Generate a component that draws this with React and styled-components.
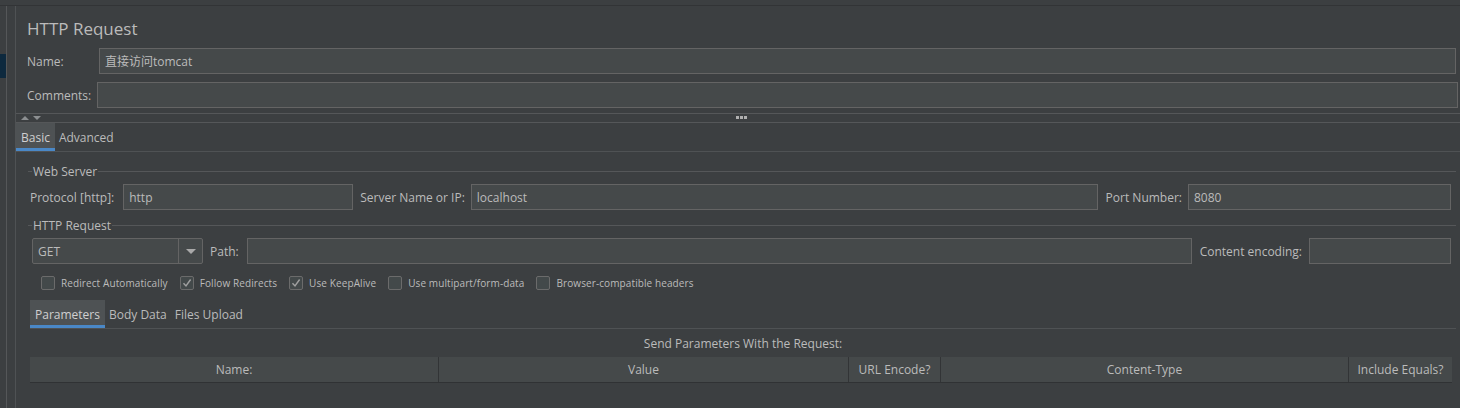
import React from "react";
import styled, { createGlobalStyle } from "styled-components";

const GlobalStyle = createGlobalStyle`
  html, body {
    margin: 0;
    padding: 0;
    background: #3c3f41;
  }
  body {
    font-family: "Open Sans", "Noto Sans CJK SC", sans-serif;
    font-size: 12px;
    color: #bbbbbb;
  }
`;

const Window = styled.div`
  width: 1460px;
  height: 408px;
  background: #3c3f41;
  display: flex;
  flex-direction: column;
  overflow: hidden;
`;

const TopStrip = styled.div`
  height: 5px;
  border-bottom: 1px solid #323436;
`;

const Body = styled.div`
  flex: 1;
  display: flex;
`;

const Tree = styled.div`
  width: 6px;
  border-right: 1px solid #555759;
  padding-top: 48px;
`;

const TreeSelection = styled.div`
  height: 24px;
  background: #0d293e;
`;

const Gutter = styled.div`
  width: 8px;
  border-right: 1px solid #4f5254;
`;

const Main = styled.div`
  flex: 1;
  display: flex;
  flex-direction: column;
`;

const Header = styled.div`
  padding: 12px 0 0 11px;
  display: flex;
  flex-direction: column;
  gap: 8px;
`;

const Title = styled.div`
  font-size: 17px;
  line-height: 22px;
  height: 22px;
  color: #bbbbbb;
`;

const FieldRow = styled.div`
  display: flex;
  align-items: center;
  height: 26px;
  margin-right: ${(p) => p.$right || 0}px;
`;

const Label = styled.span`
  flex: none;
  width: ${(p) => (p.$width ? `${p.$width}px` : "auto")};
  margin: 0 ${(p) => p.$gap ?? 6}px 0 ${(p) => p.$left ?? 0}px;
  white-space: nowrap;
`;

const Input = styled.div`
  box-sizing: border-box;
  height: 26px;
  flex: ${(p) => (p.$width ? "none" : "1")};
  width: ${(p) => (p.$width ? `${p.$width}px` : "auto")};
  background: #45494a;
  border: 1px solid #646464;
  padding: 0 5px;
  display: flex;
  align-items: center;
  color: #bbbbbb;
  white-space: nowrap;
`;

const Splitter = styled.div`
  margin-top: 5px;
  height: 8px;
  border-top: 1px solid #555759;
  border-bottom: 1px solid #555759;
  display: flex;
  align-items: center;
  position: relative;
`;

const Arrows = styled.div`
  display: flex;
  gap: 4px;
  margin-left: 5px;
`;

const Arrow = styled.span`
  width: 0;
  height: 0;
  border-left: 4px solid transparent;
  border-right: 4px solid transparent;
  ${(p) =>
    p.$up
      ? "border-bottom: 4px solid #8c8f91;"
      : "border-top: 4px solid #8c8f91;"}
`;

const Dots = styled.div`
  position: absolute;
  left: 720px;
  top: 2px;
  display: flex;
  gap: 1px;
`;

const Dot = styled.span`
  width: 3px;
  height: 3px;
  background: #b0b0b0;
`;

const TabBar = styled.div`
  display: flex;
  align-items: stretch;
  height: 28px;
  border-bottom: 1px solid #4f5254;
  margin: ${(p) => p.$margin || "0"};
`;

const Tab = styled.div`
  padding: 0 ${(p) => p.$pad || 4}px;
  display: flex;
  align-items: center;
  font-size: 12px;
  color: ${(p) => (p.$active ? "#d0d0d0" : "#bbbbbb")};
  background: ${(p) => (p.$active ? "#4e5254" : "transparent")};
  box-shadow: ${(p) => (p.$active ? "inset 0 -3px 0 #4a88c7" : "none")};
`;

const Panel = styled.div`
  padding: 12px 4px 0 12px;
  display: flex;
  flex-direction: column;
`;

const Legend = styled.div`
  display: flex;
  align-items: center;
  height: 15px;
  margin-top: ${(p) => p.$top || 0}px;

  &::before {
    content: "";
    width: 4px;
    height: 1px;
    background: #555759;
    margin-right: 1px;
  }
  &::after {
    content: "";
    flex: 1;
    height: 1px;
    background: #555759;
    margin-left: 1px;
  }
`;

const Row = styled.div`
  display: flex;
  align-items: center;
  height: 26px;
  margin: 5px 5px 0 ${(p) => p.$left || 0}px;
`;

const Combo = styled.div`
  box-sizing: border-box;
  width: 171px;
  height: 26px;
  flex: none;
  border: 1px solid #646464;
  border-radius: 2px;
  background: #45494a;
  display: flex;
`;

const ComboText = styled.div`
  flex: 1;
  padding-left: 5px;
  display: flex;
  align-items: center;
`;

const ComboButton = styled.div`
  width: 23px;
  border-left: 1px solid #646464;
  display: flex;
  align-items: center;
  justify-content: center;

  &::after {
    content: "";
    border-left: 5px solid transparent;
    border-right: 5px solid transparent;
    border-top: 5px solid #a9a9a9;
  }
`;

const Checks = styled.div`
  display: flex;
  align-items: center;
  height: 14px;
  margin: 12px 0 0 13px;
`;

const Check = styled.label`
  display: flex;
  align-items: center;
  margin-right: 12px;
  font-size: 10px;
  letter-spacing: 0.1px;
  white-space: nowrap;
`;

const Box = styled.span`
  box-sizing: border-box;
  width: 14px;
  height: 14px;
  border: 1px solid #6b6b6b;
  border-radius: 2px;
  background: #43494a;
  margin-right: 6px;
  display: flex;
  align-items: center;
  justify-content: center;
`;

const Caption = styled.div`
  text-align: center;
  margin-top: 7px;
  line-height: 16px;
  height: 16px;
  padding-left: 2px;
`;

const Table = styled.div`
  margin: 5px 4px 0 2px;
  display: grid;
  grid-template-columns: 408px 410px 92px 408px 1fr;
  background: #45494a;
  border-bottom: 1px solid #303234;
  height: 25px;
`;

const HeadCell = styled.div`
  display: flex;
  align-items: center;
  justify-content: center;
  border-left: ${(p) => (p.$first ? "none" : "1px solid #323436")};
  white-space: nowrap;
`;

const CheckMark = () => (
  <svg width="10" height="10" viewBox="0 0 10 10">
    <path d="M1.5 5.2 L4 8 L8.6 1.5" fill="none" stroke="#a0a0a0" strokeWidth="1.4" />
  </svg>
);

const options = [
  { label: "Redirect Automatically", checked: false },
  { label: "Follow Redirects", checked: true },
  { label: "Use KeepAlive", checked: true },
  { label: "Use multipart/form-data", checked: false },
  { label: "Browser-compatible headers", checked: false },
];

const columns = ["Name:", "Value", "URL Encode?", "Content-Type", "Include Equals?"];

const App = () => {
  return (
    <Window>
      <GlobalStyle />
      <TopStrip />
      <Body>
        <Tree>
          <TreeSelection />
        </Tree>
        <Gutter />
        <Main>
          <Header>
            <Title>HTTP Request</Title>
            <FieldRow $right={4}>
              <Label $width={72} $gap={0}>Name:</Label>
              <Input>直接访问tomcat</Input>
            </FieldRow>
            <FieldRow $right={2}>
              <Label $width={70} $gap={0}>Comments:</Label>
              <Input />
            </FieldRow>
          </Header>
          <Splitter>
            <Arrows>
              <Arrow $up />
              <Arrow />
            </Arrows>
            <Dots>
              <Dot />
              <Dot />
              <Dot />
            </Dots>
          </Splitter>
          <TabBar>
            <Tab $active $pad={5}>Basic</Tab>
            <Tab>Advanced</Tab>
          </TabBar>
          <Panel>
            <Legend>Web Server</Legend>
            <Row $left={2}>
              <Label $gap={9}>Protocol [http]:</Label>
              <Input $width={230}>http</Input>
              <Label $left={7}>Server Name or IP:</Label>
              <Input>localhost</Input>
              <Label $left={8}>Port Number:</Label>
              <Input $width={263}>8080</Input>
            </Row>
            <Legend $top={8}>HTTP Request</Legend>
            <Row $left={4}>
              <Combo>
                <ComboText>GET</ComboText>
                <ComboButton />
              </Combo>
              <Label $left={7} $gap={8}>Path:</Label>
              <Input />
              <Label $left={8} $gap={7}>Content encoding:</Label>
              <Input $width={142} />
            </Row>
            <Checks>
              {options.map((o) => (
                <Check key={o.label}>
                  <Box>{o.checked && <CheckMark />}</Box>
                  {o.label}
                </Check>
              ))}
            </Checks>
            <TabBar $margin="10px 0 0 2px">
              <Tab $active $pad={5}>Parameters</Tab>
              <Tab>Body Data</Tab>
              <Tab>Files Upload</Tab>
            </TabBar>
            <Caption>Send Parameters With the Request:</Caption>
            <Table>
              {columns.map((c, i) => (
                <HeadCell key={c} $first={i === 0}>
                  {c}
                </HeadCell>
              ))}
            </Table>
          </Panel>
        </Main>
      </Body>
    </Window>
  );
};

export default App;
